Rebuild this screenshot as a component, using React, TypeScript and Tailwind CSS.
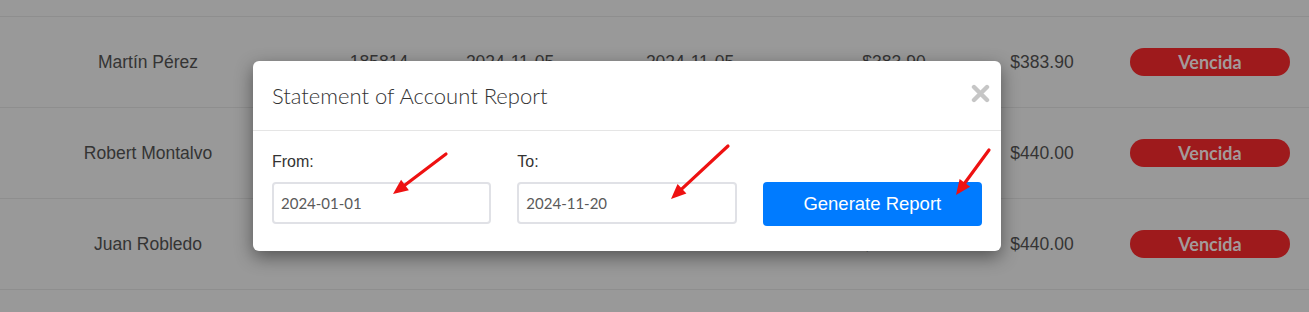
import React from "react";

type Row = { name: string; num: string; d1: string; d2: string; a1: string; a2: string };

const rows: Row[] = [
  { name: "Martín Pérez", num: "185814", d1: "2024-11-05", d2: "2024-11-05", a1: "$383.90", a2: "$383.90" },
  { name: "Robert Montalvo", num: "185815", d1: "2024-11-05", d2: "2024-11-05", a1: "$440.00", a2: "$440.00" },
  { name: "Juan Robledo", num: "185816", d1: "2024-11-05", d2: "2024-11-05", a1: "$440.00", a2: "$440.00" },
];

function Arrow({ tx, ty, hx, hy }: { tx: number; ty: number; hx: number; hy: number }) {
  const dx = hx - tx;
  const dy = hy - ty;
  const len = Math.sqrt(dx * dx + dy * dy);
  const ux = dx / len;
  const uy = dy / len;
  const hl = 15;
  const hw = 6.5;
  const bx = hx - ux * hl;
  const by = hy - uy * hl;
  const px = -uy;
  const py = ux;
  const pts = `${hx},${hy} ${bx + px * hw},${by + py * hw} ${bx - px * hw},${by - py * hw}`;
  return (
    <g>
      <line x1={tx} y1={ty} x2={bx + ux * 2} y2={by + uy * 2} stroke="#ee1111" strokeWidth={3.2} strokeLinecap="round" />
      <polygon points={pts} fill="#ee1111" />
    </g>
  );
}

export default function App() {
  const cell = "flex items-center justify-center";
  return (
    <div className="relative w-[1309px] h-[312px] overflow-hidden bg-[#999999]" style={{ fontFamily: "'Liberation Sans', Arial, sans-serif" }}>
      {/* table behind overlay */}
      <div className="h-[16px]" />
      {rows.map((r) => (
        <div
          key={r.name}
          className="grid grid-cols-[296px_166px_96px_264px_144px_152px_184px] h-[91px] border-t border-[#8e8e8e] text-[17.5px] text-[#343434]"
        >
          <div className={cell}>{r.name}</div>
          <div className={cell}>{r.num}</div>
          <div className={cell}>{r.d1}</div>
          <div className={cell}>{r.d2}</div>
          <div className={cell}>{r.a1}</div>
          <div className={cell}>{r.a2}</div>
          <div className={cell}>
            <span
              className="flex h-[28px] w-[160px] items-center justify-center rounded-full bg-[#9e1a1c] text-[18px] font-bold text-[#a39a9a]"
              style={{ fontFamily: "Lato, sans-serif" }}
            >
              Vencida
            </span>
          </div>
        </div>
      ))}
      <div className="border-t border-[#8e8e8e]" />

      {/* modal */}
      <div className="absolute left-[253px] top-[61px] w-[748px] rounded-[6px] bg-white shadow-[0_6px_18px_rgba(0,0,0,0.45)]">
        <div className="flex h-[70px] items-center justify-between border-b border-[#e5e5e5] pl-[19px] pr-[11px]">
          <h4
            className="text-[22px] font-light text-[#333333]"
            style={{ fontFamily: "Lato, sans-serif" }}
          >
            Statement of Account Report
          </h4>
          <svg width="19" height="19" viewBox="0 0 19 19" className="mt-[-4px]">
            <path d="M3 3 L16 16 M16 3 L3 16" stroke="#c6c6c6" strokeWidth="4.4" strokeLinecap="round" />
          </svg>
        </div>
        <div className="grid grid-cols-3 items-start gap-x-[26px] gap-y-[9px] px-[19px] pt-[20px] pb-[25px]">
          <label className="block h-[22px] text-[16px] leading-[22px] text-[#333333]">From:</label>
          <label className="block h-[22px] text-[16px] leading-[22px] text-[#333333]">To:</label>
          <div />
          <div
            className="flex h-[42px] items-center rounded-[4px] border-2 border-[#e0e1e6] px-[7px] text-[15px] text-[#5a5a5a]"
            style={{ fontFamily: "Lato, sans-serif" }}
          >
            2024-01-01
          </div>
          <div
            className="flex h-[42px] items-center rounded-[4px] border-2 border-[#e0e1e6] px-[7px] text-[15px] text-[#5a5a5a]"
            style={{ fontFamily: "Lato, sans-serif" }}
          >
            2024-11-20
          </div>
          <button className="flex h-[44px] items-center justify-center rounded-[4px] bg-[#007bff] text-[18.5px] text-white">
            Generate Report
          </button>
        </div>
      </div>

      {/* annotation arrows */}
      <svg className="pointer-events-none absolute left-0 top-0" width="1309" height="312">
        <Arrow tx={446} ty={154} hx={393} hy={194} />
        <Arrow tx={728} ty={146} hx={671} hy={199} />
        <Arrow tx={989} ty={150} hx={956} hy={195} />
      </svg>
    </div>
  );
}
